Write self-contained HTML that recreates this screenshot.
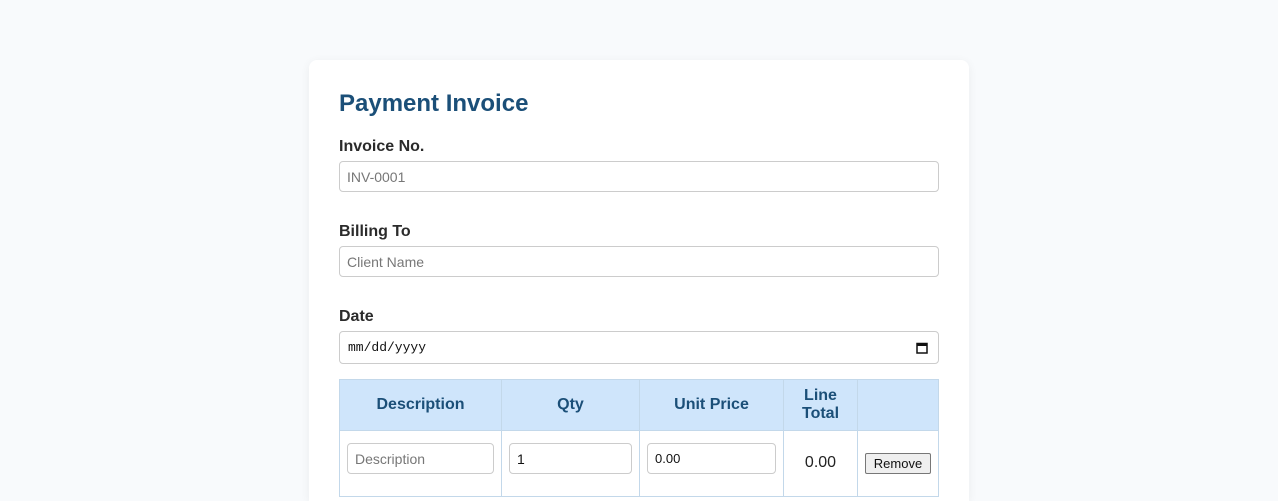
<!DOCTYPE html>
<html><head><meta charset="utf-8"><style>
*{box-sizing:border-box;margin:0;padding:0}
html,body{width:1278px;height:501px;overflow:hidden}
body{background:#f8fafc;font-family:"Liberation Sans",Arial,sans-serif;position:relative}
.card{position:absolute;left:309px;top:60px;width:660px;height:441px;background:#fff;border-radius:8px 8px 0 0;box-shadow:0 2px 10px rgba(0,0,0,0.06)}
.a{position:absolute}
h1{position:absolute;left:339px;top:89px;font-size:24px;font-weight:bold;color:#1b4f78;line-height:30px}
.lbl{position:absolute;left:339px;font-size:16px;font-weight:bold;color:#2b2b2b;line-height:20px}
.inp{position:absolute;border:1px solid #ccc;border-radius:4px;background:#fff;font-size:14px;color:#777;padding-left:7px;display:flex;align-items:center}
.th{position:absolute;top:379px;height:52px;background:#cfe5fb;border:1px solid #c3d8ea;color:#1b4f78;font-weight:bold;font-size:16px;display:flex;align-items:center;justify-content:center;text-align:center;line-height:18px}
.td{position:absolute;top:430px;height:67px;border:1px solid #c3d8ea;background:#fff}
</style></head><body>
<div class="card"></div>
<h1>Payment Invoice</h1>
<div class="lbl" style="top:137px">Invoice No.</div>
<div class="inp" style="left:339px;top:161px;width:600px;height:31px">INV-0001</div>
<div class="lbl" style="top:222px">Billing To</div>
<div class="inp" style="left:339px;top:246px;width:600px;height:31px">Client Name</div>
<div class="lbl" style="top:307px">Date</div>
<div class="inp" style="left:339px;top:331px;width:600px;height:33px;color:#111;font-family:'Liberation Mono',monospace;font-size:13px;padding-left:8px">mm/dd/yyyy
<svg style="position:absolute;right:10px;top:10px" width="12" height="12" viewBox="0 0 12 12"><rect x="1" y="1.5" width="10" height="9.5" fill="none" stroke="#111" stroke-width="1.5"/><rect x="1" y="1.5" width="10" height="2.5" fill="#111"/></svg></div>
<div class="th" style="left:339px;width:163px">Description</div>
<div class="th" style="left:501px;width:139px">Qty</div>
<div class="th" style="left:639px;width:145px">Unit Price</div>
<div class="th" style="left:783px;width:75px">Line<br>Total</div>
<div class="th" style="left:857px;width:82px"></div>
<div class="td" style="left:339px;width:163px"></div>
<div class="td" style="left:501px;width:139px"></div>
<div class="td" style="left:639px;width:145px"></div>
<div class="td" style="left:783px;width:75px"></div>
<div class="td" style="left:857px;width:82px"></div>
<div class="inp" style="left:347px;top:443px;width:147px;height:31px">Description</div>
<div class="inp" style="left:509px;top:443px;width:123px;height:31px;color:#111">1</div>
<div class="inp" style="left:647px;top:443px;width:129px;height:31px;color:#111;font-size:13px">0.00</div>
<div class="a" style="left:783px;width:75px;top:454px;text-align:center;font-size:16px;color:#222">0.00</div>
<div class="a" style="left:865px;top:453px;width:66px;height:21px;border:1px solid #777;border-radius:2px;background:#efefef;font-size:13px;color:#111;display:flex;align-items:center;justify-content:center">Remove</div>
</body></html>
